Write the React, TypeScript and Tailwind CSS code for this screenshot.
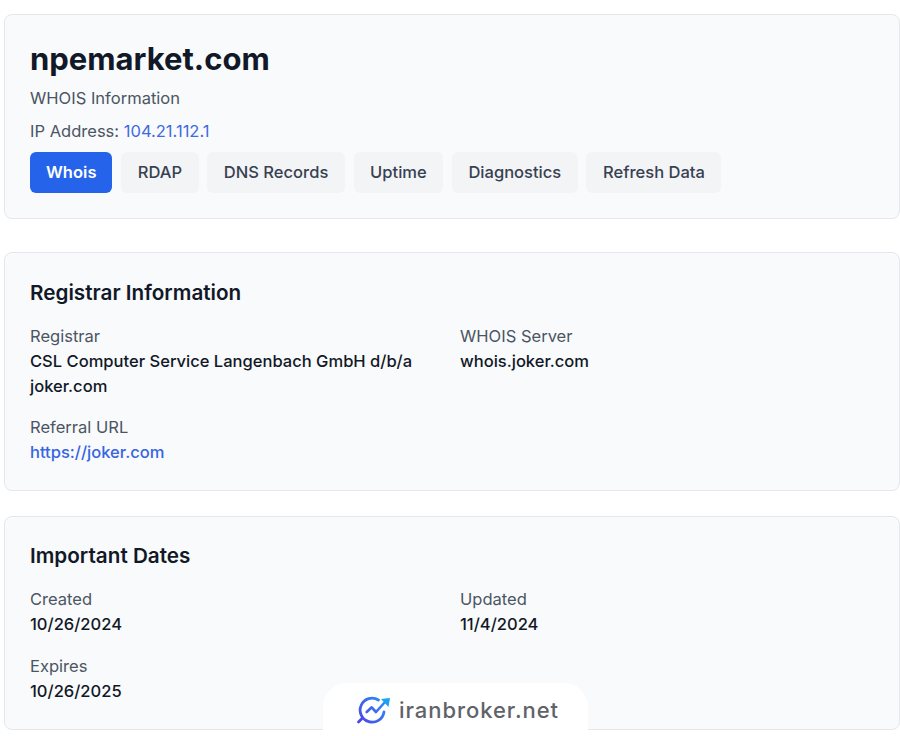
const Field = (props: { label: string; value: string; link?: boolean }) => (
  <div>
    <div className="text-[#4b5563] leading-[25px]">{props.label}</div>
    <div className={props.link ? 'text-[#3565e3] font-medium leading-[25px]' : 'text-[#111827] font-medium leading-[25px]'}>
      {props.value}
    </div>
  </div>
);

const TABS = ['RDAP', 'DNS Records', 'Uptime', 'Diagnostics', 'Refresh Data'];

export default function App() {
  return (
    <div className="relative h-[736px] w-[900px] overflow-hidden bg-white font-['Inter',sans-serif] text-[16.55px]">
      <div className="pl-1 pt-[14px] w-[900px]">
        <div className="h-[205px] rounded-lg border border-[#e5e7eb] bg-[#f9fafb] px-[25px] pt-[24px]">
          <h1 className="text-[31px] font-bold leading-[39px] text-[#111827]">npemarket.com</h1>
          <p className="mt-[8px] leading-[25px] text-[#4b5563]">WHOIS Information</p>
          <p className="mt-2 leading-[25px] text-[#4b5563]">
            IP Address: <span className="text-[#3f6ae0]">104.21.112.1</span>
          </p>
          <div className="mt-2 flex gap-[8.75px]">
            <button className="h-[41px] rounded-md bg-[#2563eb] px-[16px] font-semibold text-white">Whois</button>
            {TABS.map(tab => (
              <button key={tab} className="h-[41px] rounded-md bg-[#f3f4f6] px-[16.5px] font-medium text-[#374151]">
                {tab}
              </button>
            ))}
          </div>
        </div>

        <div className="mt-[33px] h-[239px] rounded-lg border border-[#e5e7eb] bg-[#f9fafb] px-[25px] pt-[25px]">
          <h2 className="text-[20.7px] font-semibold leading-[30px] text-[#111827]">Registrar Information</h2>
          <div className="mt-[16px] grid grid-cols-2 gap-x-[16px] gap-y-[16px]">
            <Field label="Registrar" value="CSL Computer Service Langenbach GmbH d/b/a joker.com" />
            <Field label="WHOIS Server" value="whois.joker.com" />
            <Field label="Referral URL" value="https://joker.com" link />
          </div>
        </div>

        <div className="mt-[25px] h-[214px] rounded-lg border border-[#e5e7eb] bg-[#f9fafb] px-[25px] pt-[24px]">
          <h2 className="text-[20.7px] font-semibold leading-[30px] text-[#111827]">Important Dates</h2>
          <div className="mt-[16px] grid grid-cols-2 gap-x-[16px] gap-y-[17px]">
            <Field label="Created" value="10/26/2024" />
            <Field label="Updated" value="11/4/2024" />
            <Field label="Expires" value="10/26/2025" />
          </div>
        </div>
      </div>

      {/* watermark sits over the last card */}
      <div className="absolute left-[323px] top-[683px] flex h-[53px] w-[265px] items-center justify-center gap-[7px] rounded-t-[24px] bg-white pl-[3px] pt-[2px]">
        <svg width="37" height="31" viewBox="0 0 37 31" fill="none">
          <defs>
            <linearGradient id="logo" x1="3" y1="28" x2="35" y2="3" gradientUnits="userSpaceOnUse">
              <stop offset="0" stopColor="#4f46e5" />
              <stop offset="0.5" stopColor="#3b6cf0" />
              <stop offset="1" stopColor="#1da1f2" />
            </linearGradient>
          </defs>
          <path d="M29 17A12 12 0 1 1 23.5 5" stroke="url(#logo)" strokeWidth="2.8" strokeLinecap="round" />
          <path d="M7.5 23L3.5 27" stroke="#4f46e5" strokeWidth="2.8" strokeLinecap="round" />
          <path d="M11.7 17l5-4.7 4.3 4.7 9-10" stroke="url(#logo)" strokeWidth="2.6" strokeLinecap="round" strokeLinejoin="round" />
          <path d="M26 4l9-1-1.5 9z" fill="#1da1f2" />
        </svg>
        <span className="text-[22px] font-medium tracking-[0.95px] text-[#5f6368]">iranbroker.net</span>
      </div>
    </div>
  );
}
